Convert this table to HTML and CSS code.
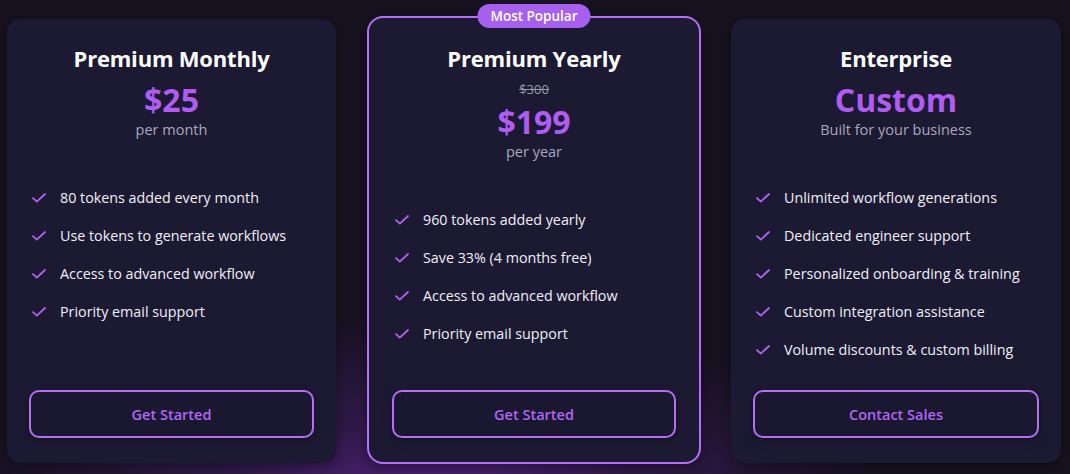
FILE: index.html
```html
<!DOCTYPE html>
<html lang="en">
<head>
<meta charset="utf-8">
<title>Pricing</title>
<link rel="stylesheet" href="styles.css">
</head>
<body>
<main class="pricing">
  <section class="card">
    <header class="card-head">
      <h2 class="plan">Premium Monthly</h2>
      <div class="price">$25</div>
      <div class="period">per month</div>
    </header>
    <ul class="features">
      <li><svg class="check" viewBox="0 0 14 10"><path d="M1 5.2 L4.8 8.6 L13 1"/></svg>80 tokens added every month</li>
      <li><svg class="check" viewBox="0 0 14 10"><path d="M1 5.2 L4.8 8.6 L13 1"/></svg>Use tokens to generate workflows</li>
      <li><svg class="check" viewBox="0 0 14 10"><path d="M1 5.2 L4.8 8.6 L13 1"/></svg>Access to advanced workflow</li>
      <li><svg class="check" viewBox="0 0 14 10"><path d="M1 5.2 L4.8 8.6 L13 1"/></svg>Priority email support</li>
    </ul>
    <button class="btn">Get Started</button>
  </section>

  <section class="card popular">
    <span class="badge">Most Popular</span>
    <header class="card-head">
      <h2 class="plan">Premium Yearly</h2>
      <div class="old-price">$300</div>
      <div class="price">$199</div>
      <div class="period">per year</div>
    </header>
    <ul class="features">
      <li><svg class="check" viewBox="0 0 14 10"><path d="M1 5.2 L4.8 8.6 L13 1"/></svg>960 tokens added yearly</li>
      <li><svg class="check" viewBox="0 0 14 10"><path d="M1 5.2 L4.8 8.6 L13 1"/></svg>Save 33% (4 months free)</li>
      <li><svg class="check" viewBox="0 0 14 10"><path d="M1 5.2 L4.8 8.6 L13 1"/></svg>Access to advanced workflow</li>
      <li><svg class="check" viewBox="0 0 14 10"><path d="M1 5.2 L4.8 8.6 L13 1"/></svg>Priority email support</li>
    </ul>
    <button class="btn">Get Started</button>
  </section>

  <section class="card">
    <header class="card-head">
      <h2 class="plan">Enterprise</h2>
      <div class="price">Custom</div>
      <div class="period">Built for your business</div>
    </header>
    <ul class="features">
      <li><svg class="check" viewBox="0 0 14 10"><path d="M1 5.2 L4.8 8.6 L13 1"/></svg>Unlimited workflow generations</li>
      <li><svg class="check" viewBox="0 0 14 10"><path d="M1 5.2 L4.8 8.6 L13 1"/></svg>Dedicated engineer support</li>
      <li><svg class="check" viewBox="0 0 14 10"><path d="M1 5.2 L4.8 8.6 L13 1"/></svg>Personalized onboarding &amp; training</li>
      <li><svg class="check" viewBox="0 0 14 10"><path d="M1 5.2 L4.8 8.6 L13 1"/></svg>Custom integration assistance</li>
      <li><svg class="check" viewBox="0 0 14 10"><path d="M1 5.2 L4.8 8.6 L13 1"/></svg>Volume discounts &amp; custom billing</li>
    </ul>
    <button class="btn">Contact Sales</button>
  </section>
</main>
</body>
</html>
```

FILE: styles.css
```css
* { box-sizing: border-box; }

html, body {
  margin: 0;
  height: 474px;
  overflow: hidden;
}

body {
  font-family: "Open Sans", "Noto Sans", sans-serif;
  color: #ffffff;
  background:
    radial-gradient(ellipse 480px 230px at 430px 540px, rgba(100, 40, 150, 1), rgba(66, 30, 104, 0.6) 50%, rgba(22, 18, 31, 0) 100%),
    #16121f;
}

.pricing {
  display: grid;
  grid-template-columns: 329px 329px 330px;
  column-gap: 33px;
  padding: 19px 0 0 7px;
  height: 474px;
  align-items: start;
}

.card {
  position: relative;
  height: 444px;
  background: #1c1a33;
  border-radius: 14px;
  padding: 24px 22px 25px;
  display: flex;
  flex-direction: column;
  box-shadow: 0 4px 14px rgba(0, 0, 0, 0.35);
}

.card.popular {
  margin: -3px -3px 0 -2px;
  height: 448px;
  border: 2px solid #b56ef5;
  border-radius: 16px;
  padding: 25px 23px 24px;
}

.badge {
  position: absolute;
  top: -14px;
  left: 50%;
  transform: translateX(-50%);
  background: #a75ff0;
  color: #fff;
  font-size: 13.5px;
  font-weight: 600;
  line-height: 24px;
  padding: 0 13px;
  border-radius: 999px;
  white-space: nowrap;
}

.card-head {
  text-align: center;
}

.plan {
  margin: 0;
  font-size: 22px;
  font-weight: 700;
  line-height: 30px;
  letter-spacing: -0.2px;
}

.price {
  color: #b05cf1;
  font-size: 32px;
  font-weight: 700;
  line-height: 36px;
  margin-top: 9px;
}

.old-price {
  color: #9a98ad;
  font-size: 13px;
  line-height: 18px;
  margin-top: 7px;
  text-decoration: line-through;
}

.old-price + .price {
  margin-top: 6px;
}

.period {
  color: #a9a7bd;
  font-size: 14.5px;
  line-height: 20px;
  margin-top: 2px;
}

.features {
  list-style: none;
  margin: 47px 0 0;
  padding: 0 0 0 3px;
  flex: 1;
  display: flex;
  flex-direction: column;
  gap: 16px;
}

.features li {
  display: flex;
  align-items: center;
  gap: 14px;
  font-size: 14.3px;
  line-height: 22px;
  color: #f0eff6;
}

.check {
  width: 14px;
  height: 10px;
  flex: none;
  fill: none;
  stroke: #b064f2;
  stroke-width: 1.8;
  stroke-linecap: round;
  stroke-linejoin: round;
}

.btn {
  height: 48px;
  width: 100%;
  background: #1a1830;
  border: 2px solid #b56ef5;
  border-radius: 10px;
  color: #b466f3;
  font-family: inherit;
  font-size: 14.5px;
  font-weight: 600;
  box-shadow: 0 3px 8px rgba(0, 0, 0, 0.35);
}
```
